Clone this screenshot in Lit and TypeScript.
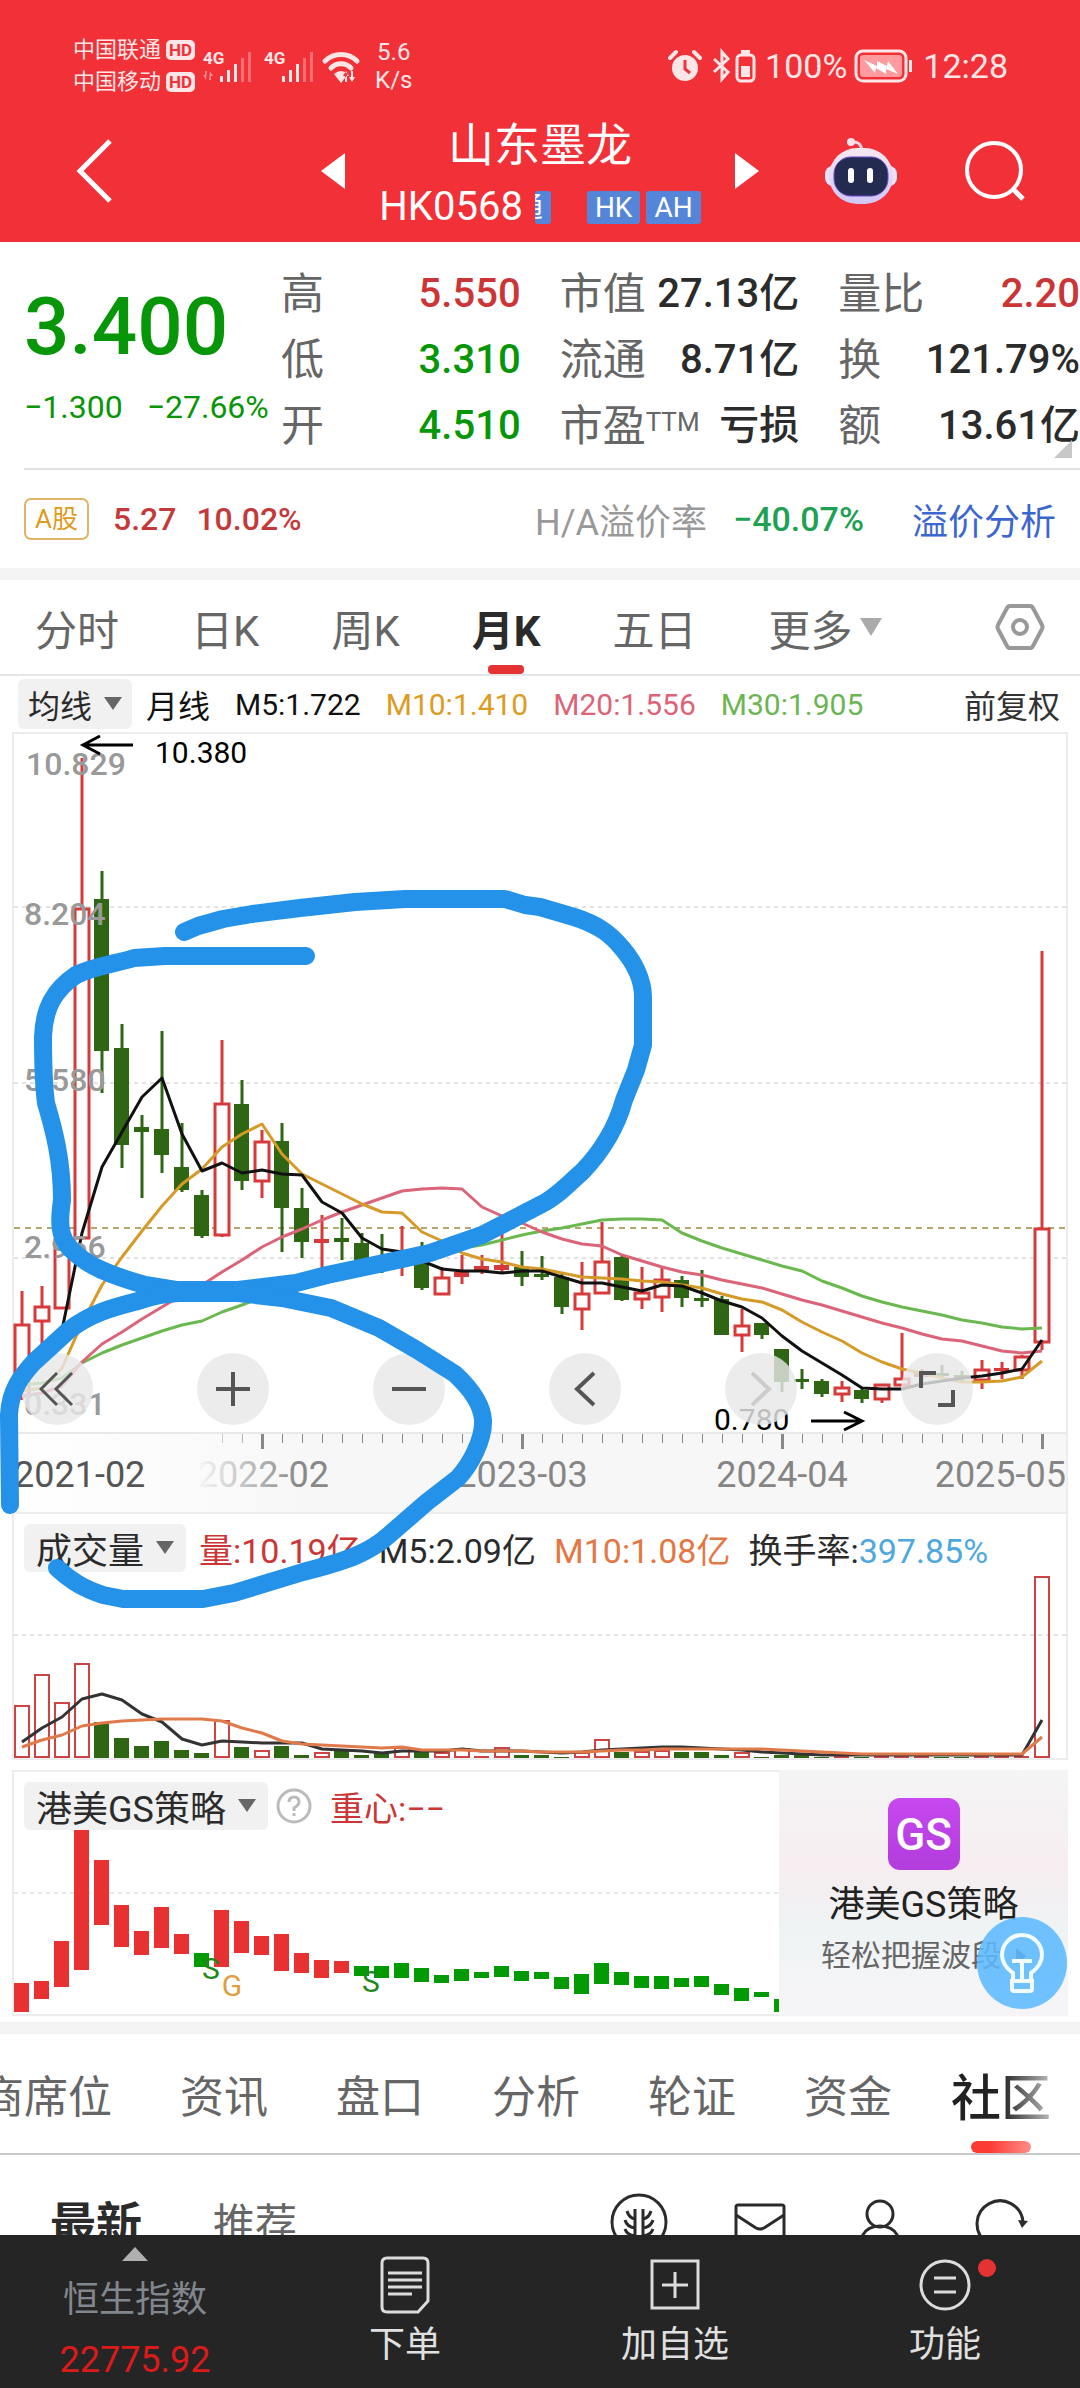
import { LitElement, html, svg, css } from "lit";
import { customElement } from "lit/decorators.js";
import { classMap } from "lit/directives/class-map.js";

type Tone = "up" | "down" | "flat";

// Monthly bars, in plot units: [rising, high, body top, body bottom, low]
const CANDLES: [number, number, number, number, number][] = [
  [1, 1291, 1325, 1396, 1400], [1, 1286, 1307, 1321, 1352], [1, 1240, 1240, 1308, 1308],
  [1, 758, 909, 1238, 1238], [0, 871, 899, 1051, 1093], [0, 1024, 1048, 1145, 1168],
  [0, 1115, 1127, 1132, 1198], [0, 1031, 1129, 1155, 1173], [0, 1123, 1167, 1190, 1192],
  [0, 1190, 1195, 1236, 1238], [1, 1040, 1104, 1235, 1237], [0, 1080, 1104, 1181, 1190],
  [1, 1130, 1142, 1181, 1198], [0, 1123, 1141, 1208, 1252], [0, 1188, 1208, 1242, 1258],
  [1, 1215, 1239, 1243, 1274], [0, 1218, 1238, 1242, 1260], [0, 1233, 1243, 1260, 1262],
  [0, 1234, 1257, 1263, 1273], [1, 1226, 1253, 1257, 1276], [0, 1242, 1260, 1288, 1290],
  [1, 1267, 1278, 1294, 1294], [1, 1255, 1272, 1277, 1284], [1, 1255, 1266, 1270, 1274],
  [1, 1234, 1265, 1270, 1272], [0, 1251, 1267, 1277, 1286], [0, 1256, 1274, 1277, 1280],
  [0, 1272, 1277, 1307, 1314], [1, 1262, 1294, 1309, 1330], [1, 1222, 1262, 1293, 1294],
  [0, 1256, 1257, 1300, 1301], [1, 1267, 1293, 1299, 1309], [1, 1267, 1280, 1297, 1312],
  [0, 1276, 1280, 1298, 1307], [0, 1270, 1298, 1300, 1307], [0, 1296, 1299, 1335, 1335],
  [1, 1309, 1326, 1335, 1352], [0, 1323, 1323, 1335, 1339], [0, 1349, 1349, 1382, 1392],
  [0, 1369, 1379, 1381, 1389], [0, 1379, 1381, 1394, 1397], [1, 1381, 1388, 1394, 1402],
  [0, 1389, 1390, 1399, 1403], [1, 1384, 1385, 1399, 1403], [1, 1333, 1379, 1385, 1386],
  [1, 1369, 1373, 1377, 1385], [0, 1365, 1373, 1375, 1378], [0, 1371, 1375, 1379, 1381],
  [1, 1360, 1370, 1380, 1389], [1, 1362, 1368, 1371, 1379], [1, 1355, 1357, 1370, 1379],
  [1, 951, 1229, 1342, 1350],
];

const MA5 = [1384, 1364, 1330, 1233, 1167, 1132, 1097, 1078, 1134, 1171, 1163, 1173, 1170, 1174, 1175, 1202, 1213, 1238, 1249, 1252, 1261, 1269, 1271, 1271, 1273, 1271, 1271, 1277, 1283, 1283, 1287, 1291, 1285, 1286, 1293, 1301, 1307, 1318, 1336, 1351, 1363, 1375, 1388, 1389, 1389, 1384, 1381, 1378, 1376, 1373, 1369, 1340];
const MA10 = [1391, 1388, 1368, 1323, 1285, 1257, 1231, 1206, 1184, 1169, 1147, 1134, 1124, 1154, 1174, 1184, 1194, 1204, 1212, 1213, 1232, 1241, 1253, 1259, 1262, 1267, 1269, 1273, 1277, 1278, 1279, 1281, 1282, 1285, 1288, 1294, 1299, 1302, 1310, 1322, 1332, 1341, 1353, 1362, 1369, 1373, 1378, 1382, 1382, 1381, 1377, 1361];
const MA20 = [1396, 1393, 1386, 1362, 1344, 1332, 1319, 1307, 1295, 1285, 1272, 1260, 1247, 1237, 1229, 1220, 1212, 1205, 1198, 1191, 1189, 1188, 1189, 1207, 1216, 1223, 1232, 1239, 1244, 1246, 1255, 1261, 1267, 1272, 1275, 1280, 1284, 1288, 1294, 1300, 1305, 1311, 1317, 1323, 1328, 1334, 1339, 1341, 1346, 1351, 1353, 1351];
const MA30 = [1385, 1383, 1378, 1363, 1353, 1345, 1338, 1331, 1325, 1321, 1312, 1305, 1297, 1291, 1285, 1280, 1275, 1270, 1265, 1261, 1256, 1252, 1248, 1245, 1240, 1235, 1231, 1228, 1224, 1220, 1219, 1219, 1220, 1233, 1241, 1248, 1254, 1260, 1266, 1271, 1281, 1288, 1296, 1302, 1307, 1311, 1315, 1320, 1323, 1327, 1329, 1328];

const VOLUME_TOPS = [1706, 1675, 1703, 1664, 1722, 1738, 1746, 1741, 1750, 1753, 1721, 1747, 1751, 1746, 1755, 1753, 1751, 1755, 1753, 1748, 1752, 1753, 1749, 1756, 1748, 1755, 1755, 1757, 1753, 1740, 1752, 1752, 1751, 1752, 1752, 1755, 1753, 1757, 1755, 1755, 1757, 1756, 1757, 1756, 1756, 1756, 1757, 1757, 1756, 1756, 1756, 1577];
const VOLUME_MA5 = [1742, 1728, 1717, 1699, 1694, 1700, 1714, 1722, 1739, 1745, 1741, 1742, 1743, 1743, 1743, 1749, 1750, 1751, 1753, 1751, 1751, 1751, 1749, 1751, 1751, 1751, 1752, 1753, 1752, 1750, 1749, 1748, 1747, 1747, 1748, 1749, 1750, 1752, 1753, 1754, 1755, 1755, 1755, 1755, 1755, 1755, 1755, 1755, 1755, 1755, 1755, 1720];
const VOLUME_MA10 = [1747, 1740, 1735, 1726, 1723, 1721, 1720, 1719, 1719, 1719, 1721, 1728, 1733, 1741, 1744, 1745, 1746, 1747, 1748, 1747, 1750, 1750, 1750, 1751, 1751, 1751, 1752, 1752, 1752, 1751, 1750, 1750, 1749, 1749, 1749, 1749, 1749, 1749, 1750, 1751, 1752, 1753, 1754, 1754, 1754, 1754, 1754, 1754, 1754, 1754, 1754, 1737];

// Strategy blocks: [bullish, top, bottom]
const STRATEGY: [number, number, number][] = [
  [1, 1983, 2012], [1, 1981, 1999], [1, 1941, 1987], [1, 1830, 1970], [1, 1860, 1925],
  [1, 1905, 1947], [1, 1931, 1955], [1, 1907, 1948], [1, 1934, 1954], [0, 1953, 1967],
  [1, 1910, 1967], [1, 1921, 1953], [1, 1936, 1955], [1, 1934, 1971], [1, 1953, 1973],
  [1, 1960, 1978], [1, 1961, 1973], [0, 1966, 1976], [0, 1966, 1978], [0, 1963, 1978],
  [0, 1968, 1982], [0, 1975, 1983], [0, 1969, 1981], [0, 1972, 1978], [0, 1966, 1977],
  [0, 1971, 1981], [0, 1972, 1979], [0, 1977, 1989], [0, 1974, 1994], [0, 1963, 1984],
  [0, 1972, 1985], [0, 1976, 1988], [0, 1976, 1989], [0, 1978, 1987], [0, 1976, 1987],
  [0, 1984, 1995], [0, 1988, 2001], [0, 1992, 1997],
];

const xAt = (i: number) => 22 + i * 20;
const points = (ys: number[]) => ys.map((y, i) => `${xAt(i)},${y}`).join(" ");

const QUOTES: { label: string; sup?: string; value: string; tone: Tone }[] = [
  { label: "高", value: "5.550", tone: "up" },
  { label: "市值", value: "27.13亿", tone: "flat" },
  { label: "量比", value: "2.20", tone: "up" },
  { label: "低", value: "3.310", tone: "down" },
  { label: "流通", value: "8.71亿", tone: "flat" },
  { label: "换", value: "121.79%", tone: "flat" },
  { label: "开", value: "4.510", tone: "down" },
  { label: "市盈", sup: "TTM", value: "亏损", tone: "flat" },
  { label: "额", value: "13.61亿", tone: "flat" },
];

const base = css`
  :host {
    display: block;
    font-family: Roboto, "Noto Sans CJK SC", sans-serif;
  }
  * {
    box-sizing: border-box;
  }
  button {
    display: flex;
    align-items: center;
    justify-content: center;
    margin: 0;
    padding: 0;
    border: 0;
    background: none;
    color: inherit;
    font: inherit;
    white-space: nowrap;
  }
  a {
    color: inherit;
    text-decoration: none;
  }
  svg {
    display: block;
    flex: none;
  }
`;

@customElement("status-bar")
export class StatusBar extends LitElement {
  static styles = [base, css`
    .bar {
      display: flex;
      justify-content: space-between;
      align-items: center;
      height: 104px;
      padding: 27px 72px 0 73px;
      color: #ffe6e6;
    }
    .side {
      display: flex;
      align-items: center;
    }
    .carriers {
      display: grid;
      margin-right: 8px;
    }
    .carrier {
      display: flex;
      align-items: center;
      gap: 5px;
      font-size: 22px;
      line-height: 32px;
    }
    .hd {
      padding: 0 3px;
      border-radius: 5px;
      background: #ffe6e6;
      color: #f13038;
      font-size: 17px;
      font-weight: 700;
      line-height: 20px;
    }
    .speed {
      margin-left: 14px;
      font-size: 24px;
      line-height: 28px;
      text-align: center;
    }
    .level {
      margin: 0 7px 0 9px;
      font-size: 34px;
    }
    .clock {
      margin-left: 9px;
      font-size: 34px;
    }
  `];

  render() {
    return html`
      <div class="bar">
        <div class="side">
          <div class="carriers">
            <div class="carrier">中国联通<span class="hd">HD</span></div>
            <div class="carrier">中国移动<span class="hd">HD</span></div>
          </div>
          <svg width="158" height="36" viewBox="0 0 158 36" fill="#ffe6e6">
            <g font-size="17" font-weight="700">
              <text x="0" y="16">4G</text>
              <text x="61" y="16">4G</text>
            </g>
            <path d="M3 32l-3-5h2v-4h2zM7 23l3 5h-2v4h-2z" opacity=".5" />
            <path d="M17 28h3v6h-3zM24 22h3v12h-3zM31 16h3v18h-3z" />
            <path d="M38 10h3v24h-3zM45 4h3v30h-3z" opacity=".35" />
            <path d="M79 28h3v6h-3zM86 22h3v12h-3zM93 16h3v18h-3z" />
            <path d="M100 10h3v24h-3zM107 4h3v30h-3z" opacity=".35" />
            <g fill="none" stroke="#ffe6e6" stroke-width="5" stroke-linecap="round">
              <path d="M122 13a23 23 0 0 1 32 0M128 20a14 14 0 0 1 20 0" />
            </g>
            <path d="M131 26q7-6 14 0l-7 9zM146 28l-3-5-3 5h2v6h2v-6zM152 29h-2v-6h-2v6h-2l3 5z" />
          </svg>
          <div class="speed"><div>5.6</div><div>K/s</div></div>
        </div>
        <div class="side">
          <svg width="88" height="36" viewBox="0 0 88 36">
            <circle cx="17" cy="20" r="13" fill="#ffe6e6" />
            <path d="M17 12v9l5 4" fill="none" stroke="#f13038" stroke-width="3" />
            <path d="M2 10l6-6M26 4l6 6" stroke="#ffe6e6" stroke-width="4" stroke-linecap="round" />
            <path d="M46 11l14 13-6 7V4l6 7-14 13" fill="none" stroke="#ffe6e6" stroke-width="3" />
            <rect x="69" y="7" width="17" height="26" rx="4" fill="none" stroke="#ffe6e6" stroke-width="3" />
            <path d="M73 2h9v4h-9zM73 18h9v11h-9z" fill="#ffe6e6" />
          </svg>
          <span class="level">100%</span>
          <svg width="60" height="34" viewBox="0 0 60 34">
            <rect x="2" y="2" width="50" height="30" rx="7" fill="none" stroke="#ffe6e6" stroke-width="3" />
            <rect x="6" y="6" width="42" height="22" rx="3" fill="#ff9a9e" />
            <path d="M10 11l13 6v-5l10 5 1-5 10 13-12-5v5l-10-6-1 5z" fill="#fff" />
            <path d="M55 11h3v12h-3z" fill="#ffe6e6" />
          </svg>
          <span class="clock">12:28</span>
        </div>
      </div>
    `;
  }
}

@customElement("stock-header")
export class StockHeader extends LitElement {
  static styles = [base, css`
    .header {
      padding-bottom: 4px;
      background: #f13038;
      color: #fff;
    }
    .row {
      display: grid;
      grid-template-columns: 1fr auto 1fr;
      align-items: center;
      gap: 34px;
      padding: 0 54px;
    }
    .left,
    .right {
      display: flex;
      align-items: center;
      justify-content: space-between;
    }
    .left {
      padding-left: 22px;
    }
    .names {
      padding-top: 10px;
      text-align: center;
    }
    .name {
      margin: 0;
      font-size: 46px;
      font-weight: 400;
      line-height: 62px;
    }
    .code {
      display: flex;
      align-items: center;
      gap: 6px;
      font-size: 40px;
      line-height: 62px;
    }
    .tag {
      padding: 0 8px;
      border-radius: 3px;
      background: #5585d8;
      font-size: 28px;
      line-height: 33px;
    }
    .clipped {
      display: flex;
      justify-content: flex-end;
      width: 16px;
      margin: 0 30px 0 6px;
      padding: 0 8px 0 0;
      overflow: hidden;
    }
  `];

  render() {
    return html`
      <header class="header">
        <status-bar></status-bar>
        <div class="row">
          <div class="left">
            <button aria-label="返回">
              <svg width="38" height="66" viewBox="0 0 38 66" fill="none" stroke="#fff" stroke-width="5">
                <path d="M34 3L4 33l30 30" />
              </svg>
            </button>
            <button aria-label="上一只">
              <svg width="24" height="38" viewBox="0 0 24 38" fill="#fff"><path d="M24 1v36L0 19z" /></svg>
            </button>
          </div>
          <div class="names">
            <h1 class="name">山东墨龙</h1>
            <div class="code">
              <span>HK0568</span>
              <span class="tag clipped">通</span>
              <span class="tag">HK</span>
              <span class="tag">AH</span>
            </div>
          </div>
          <div class="right">
            <button aria-label="下一只">
              <svg width="24" height="38" viewBox="0 0 24 38" fill="#fff"><path d="M0 1v36l24-18z" /></svg>
            </button>
            <button aria-label="智能助手">
              <svg width="74" height="70" viewBox="0 0 74 70">
                <defs>
                  <linearGradient id="shell" x1="0" y1="0" x2="0" y2="1">
                    <stop offset="0" stop-color="#f8e8f2" />
                    <stop offset="1" stop-color="#cfc6f4" />
                  </linearGradient>
                </defs>
                <path d="M28 6q9-1 10 9" fill="none" stroke="#f7d7e4" stroke-width="3" />
                <circle cx="27" cy="6" r="4" fill="#ffe3ea" />
                <rect x="1" y="30" width="72" height="20" rx="8" fill="#e9e2f8" />
                <rect x="5" y="12" width="64" height="56" rx="28" fill="url(#shell)" />
                <rect x="10" y="21" width="54" height="39" rx="17" fill="#232c50" stroke="#6a48c8" stroke-width="1" />
                <path d="M27 35v9M46 35v9" stroke="#fff" stroke-width="6" stroke-linecap="round" />
              </svg>
            </button>
            <button aria-label="搜索">
              <svg width="62" height="62" viewBox="0 0 62 62" fill="none" stroke="#fff" stroke-width="4">
                <circle cx="30" cy="30" r="27" />
                <path d="M49 49l10 10" stroke-width="5" />
              </svg>
            </button>
          </div>
        </div>
      </header>
    `;
  }
}

@customElement("quote-summary")
export class QuoteSummary extends LitElement {
  static styles = [base, css`
    .top {
      display: grid;
      grid-template-columns: 257px 1fr;
      margin-left: 24px;
      padding: 19px 0 9px;
      border-bottom: 2px solid #e2e2e2;
    }
    .price {
      padding-top: 16px;
      font-size: 80px;
      font-weight: 500;
      line-height: 100px;
    }
    .change {
      display: flex;
      gap: 24px;
      font-size: 32px;
      line-height: 60px;
      white-space: nowrap;
    }
    .stats {
      display: grid;
      grid-template-columns: 240fr 240fr 242fr;
      grid-auto-rows: 66px;
      column-gap: 39px;
      margin: 0;
      font-size: 40px;
      line-height: 66px;
      white-space: nowrap;
    }
    .stat {
      display: flex;
      justify-content: space-between;
    }
    .label {
      color: #666;
      font-size: 43px;
    }
    .sup {
      font-size: 26px;
      line-height: 26px;
      vertical-align: 10px;
    }
    .value {
      margin: 0;
      font-weight: 500;
    }
    .up {
      color: #cc3535;
    }
    .down {
      color: #079607;
    }
    .flat {
      color: #2b2b2b;
    }
    .more {
      position: absolute;
      right: 8px;
      bottom: 12px;
    }
    .summary {
      position: relative;
    }
    .ah {
      display: flex;
      align-items: center;
      height: 98px;
      padding: 0 24px;
      font-size: 32px;
    }
    .badge {
      margin-right: 24px;
      padding: 0 9px;
      border: 2px solid #e0b566;
      border-radius: 7px;
      color: #dd9b20;
      font-size: 26px;
      line-height: 38px;
    }
    .pct {
      margin: 0 auto 0 20px;
    }
    .ratio {
      color: #999;
      font-size: 36px;
    }
    .premium {
      margin: 0 48px 0 26px;
      color: #1ea152;
      font-size: 34px;
      font-weight: 500;
    }
    .red {
      color: #c43a3a;
      font-weight: 500;
    }
    .link {
      color: #3b66d0;
      font-size: 36px;
    }
  `];

  render() {
    return html`
      <section>
        <div class="summary">
          <div class="top">
            <div class="down">
              <div class="price">3.400</div>
              <div class="change"><span>−1.300</span><span>−27.66%</span></div>
            </div>
            <dl class="stats">
              ${QUOTES.map((q) => html`
                <div class="stat">
                  <dt class="label">${q.label}${q.sup ? html`<span class="sup">${q.sup}</span>` : ""}</dt>
                  <dd class="value ${q.tone}">${q.value}</dd>
                </div>`)}
            </dl>
          </div>
          <svg class="more" width="18" height="18" viewBox="0 0 18 18"><path d="M18 0v18H0z" fill="#c8c8c8" /></svg>
        </div>
        <div class="ah">
          <span class="badge">A股</span>
          <span class="red">5.27</span>
          <span class="red pct">10.02%</span>
          <span class="ratio">H/A溢价率</span>
          <span class="premium">−40.07%</span>
          <a class="link" href="#premium">溢价分析</a>
        </div>
      </section>
    `;
  }
}

@customElement("period-tabs")
export class PeriodTabs extends LitElement {
  static styles = [base, css`
    .tabs {
      display: flex;
      align-items: stretch;
      gap: 72px;
      height: 96px;
      padding: 0 35px;
      border-bottom: 2px solid #e6e6e6;
      color: #666;
      font-size: 42px;
    }
    .tab {
      position: relative;
      gap: 8px;
    }
    .active {
      color: #2b2b2b;
      font-weight: 700;
    }
    .active::after {
      content: "";
      position: absolute;
      bottom: 0;
      left: calc(50% - 18px);
      width: 36px;
      height: 9px;
      border-radius: 4px;
      background: #e53232;
    }
    .settings {
      margin-left: auto;
    }
  `];

  render() {
    return html`
      <nav class="tabs">
        ${["分时", "日K", "周K", "月K", "五日"].map((t) => html`
          <button class=${classMap({ tab: true, active: t === "月K" })}>${t}</button>`)}
        <button class="tab" aria-haspopup="menu">更多
          <svg width="22" height="20" viewBox="0 0 22 20" fill="#aaa"><path d="M0 1h22L11 19z" /></svg>
        </button>
        <button class="settings" aria-label="图表设置">
          <svg width="50" height="48" viewBox="0 0 50 48" fill="none" stroke="#999" stroke-width="4">
            <path d="M15 3h20q2 0 3 2l9 17q1 2 0 4l-9 17q-1 2-3 2H15q-2 0-3-2L3 26q-1-2 0-4l9-17q1-2 3-2z" />
            <circle cx="25" cy="24" r="7" />
          </svg>
        </button>
      </nav>
    `;
  }
}

@customElement("chart-board")
export class ChartBoard extends LitElement {
  static styles = [base, css`
    .board {
      position: relative;
    }
    .legend {
      display: flex;
      align-items: center;
      gap: 25px;
      height: 56px;
      padding: 0 20px 0 18px;
      font-size: 30px;
      white-space: nowrap;
    }
    .chip {
      gap: 12px;
      height: 48px;
      padding: 0 12px;
      border-radius: 6px;
      background: #f1f1f1;
      color: #2b2b2b;
      font-size: 36px;
    }
    .small {
      height: 50px;
      margin-right: -11px;
      padding: 0 10px;
      font-size: 32px;
    }
    .adjust {
      margin-left: auto;
      color: #333;
      font-size: 32px;
    }
    .cjk {
      font-size: 32px;
    }
    .black {
      color: #111;
    }
    .dark {
      color: #2b2b2b;
    }
    .gold {
      color: #dd9b20;
    }
    .pink {
      color: #dc6478;
    }
    .green {
      color: #6bb552;
    }
    .red {
      color: #cc3535;
    }
    .orange {
      color: #e47845;
    }
    .blue {
      color: #4ea8de;
    }
    .panel {
      margin: 0 12px;
      border: 2px solid #ececec;
      border-bottom: 0;
    }
    .plot,
    .ink {
      width: 100%;
      height: auto;
    }
    .plot {
      overflow: visible;
    }
    .price {
      position: relative;
    }
    .controls {
      position: absolute;
      right: 41px;
      bottom: 7px;
      left: -45px;
      display: grid;
      grid-template-columns: repeat(6, 1fr);
    }
    .round {
      width: 72px;
      height: 72px;
      justify-self: center;
      border-radius: 50%;
      background: rgba(232, 232, 232, 0.82);
    }
    .ticks {
      background: linear-gradient(90deg, #fff, #f7f7f7 30%);
      border-top: 2px solid #e9e9e9;
    }
    .readout {
      display: flex;
      align-items: center;
      gap: 18px;
      height: 58px;
      padding: 10px 10px 0;
      font-size: 34px;
      white-space: nowrap;
    }
    .first {
      margin-left: -5px;
    }
    .volume {
      border-bottom: 2px solid #ececec;
    }
    .strategy {
      display: grid;
      grid-template-columns: 767fr 289fr;
      margin: 10px 12px 6px;
    }
    .main {
      border: 2px solid #ececec;
      border-right: 0;
    }
    .help {
      margin-left: -10px;
    }
    .promo {
      display: flex;
      flex-direction: column;
      align-items: center;
      padding-top: 28px;
      background: linear-gradient(180deg, #f5f5f6, #f6edf0 40%, #eef3f4 66%, #f5f5f8 88%);
      color: #222;
      font-size: 36px;
      line-height: 70px;
      white-space: nowrap;
    }
    .logo {
      width: 72px;
      height: 72px;
      border-radius: 12px;
      background: linear-gradient(#c748f0, #b23cdc);
      color: #fff;
      font-size: 44px;
      font-weight: 500;
      line-height: 74px;
      text-align: center;
    }
    .slogan {
      display: flex;
      align-items: center;
      gap: 15px;
      color: #666;
      font-size: 30px;
      line-height: 32px;
    }
    .ink {
      position: absolute;
      top: 56px;
      left: 0;
      pointer-events: none;
    }
    .bulb {
      position: absolute;
      right: 13px;
      bottom: 7px;
      width: 90px;
      height: 92px;
      border-radius: 50%;
      background: rgba(92, 185, 255, 0.88);
    }
  `];

  private caret() {
    return html`<svg width="18" height="14" viewBox="0 0 18 14" fill="#666"><path d="M0 0h18L9 13z" /></svg>`;
  }

  private candle(i: number) {
    const [rising, high, top, bottom, low] = CANDLES[i];
    const x = xAt(i);
    const color = rising ? "#d63a3a" : "#2f6613";
    const hollow = rising && bottom - top > 5;
    return svg`
      <path d="M${x} ${high}V${top}M${x} ${bottom}V${low}" stroke=${color} stroke-width="3" />
      ${hollow
        ? svg`<rect x=${x - 7} y=${top} width="14" height=${bottom - top} fill="#fff" stroke=${color} stroke-width="3" />`
        : svg`<rect x=${x - 8} y=${top} width="15" height=${Math.max(bottom - top, 3)} fill=${color} />`}
    `;
  }

  private volumeBar(i: number) {
    const rising = CANDLES[i][0];
    const x = xAt(i);
    const top = VOLUME_TOPS[i];
    return rising && top < 1754
      ? svg`<rect x=${x - 7} y=${top} width="14" height=${1757 - top} fill="none" stroke="#cc4444" stroke-width="2" />`
      : svg`<rect x=${x - 8} y=${top} width="15" height=${1758 - top} fill=${rising ? "#cc4444" : "#2f6613"} />`;
  }

  render() {
    const grid = (y: number) => svg`<path d="M14 ${y}H1066" stroke="#e2e2e2" stroke-width="2" stroke-dasharray="4 4" />`;
    const line = (ys: number[], color: string) =>
      svg`<polyline points=${points(ys)} fill="none" stroke=${color} stroke-width="3" stroke-linejoin="round" />`;
    return html`
      <section class="board">
        <div class="legend">
          <button class="chip small" aria-haspopup="menu">均线${this.caret()}</button>
          <span class="cjk black">月线</span>
          <span class="black">M5:1.722</span>
          <span class="gold">M10:1.410</span>
          <span class="pink">M20:1.556</span>
          <span class="green">M30:1.905</span>
          <span class="adjust">前复权</span>
        </div>

        <div class="panel">
          <div class="price">
            <svg class="plot" viewBox="14 734 1052 698" role="img" aria-label="月K线">
              ${[907, 1083, 1258].map(grid)}
              <path d="M14 1228H1066" stroke="#b5a56e" stroke-width="2" stroke-dasharray="6 5" />
              ${CANDLES.map((_, i) => this.candle(i))}
              ${line(MA30, "#6cb850")}
              ${line(MA20, "#dc6478")}
              ${line(MA10, "#d69a28")}
              ${line(MA5, "#111")}
              <g fill="#999" font-size="32" font-weight="500">
                <text x="26" y="775">10.829</text>
                <text x="24" y="925">8.204</text>
                <text x="24" y="1091">5.580</text>
                <text x="24" y="1258">2.956</text>
                <text x="24" y="1415">0.331</text>
              </g>
              <g fill="#000" font-size="30">
                <text x="155" y="763">10.380</text>
                <text x="714" y="1430">0.780</text>
              </g>
              <path d="M133 745H83M100 736L83 745l17 9M811 1421h50M844 1412l18 9-18 9" fill="none" stroke="#000" stroke-width="3" />
            </svg>
            <div class="controls">
              <button class="round" aria-label="最早">
                <svg width="36" height="36" viewBox="0 0 36 36" fill="none" stroke="#555" stroke-width="3"><path d="M18 2L2 18l16 16M33 2L17 18l16 16" /></svg>
              </button>
              <button class="round" aria-label="放大">
                <svg width="34" height="34" viewBox="0 0 34 34" stroke="#555" stroke-width="4"><path d="M17 0v34M0 17h34" /></svg>
              </button>
              <button class="round" aria-label="缩小">
                <svg width="34" height="34" viewBox="0 0 34 34" stroke="#555" stroke-width="4"><path d="M0 17h34" /></svg>
              </button>
              <button class="round" aria-label="左移">
                <svg width="24" height="36" viewBox="0 0 24 36" fill="none" stroke="#555" stroke-width="4"><path d="M21 2L4 18l17 16" /></svg>
              </button>
              <button class="round" aria-label="右移" disabled>
                <svg width="24" height="36" viewBox="0 0 24 36" fill="none" stroke="#ccc" stroke-width="4"><path d="M3 2l17 16L3 34" /></svg>
              </button>
              <button class="round" aria-label="全屏">
                <svg width="36" height="36" viewBox="0 0 36 36" fill="none" stroke="#555" stroke-width="4"><path d="M2 17V2h15M34 19v15H19" /></svg>
              </button>
            </div>
          </div>
          <div class="ticks">
            <svg class="plot" viewBox="14 1434 1052 78" role="img" aria-label="时间轴">
              <defs>
                <linearGradient id="fade" gradientUnits="userSpaceOnUse" x1="200" x2="300" y1="0" y2="0">
                  <stop offset="0" stop-color="#888" stop-opacity="0.05" />
                  <stop offset="1" stop-color="#888" />
                </linearGradient>
              </defs>
              ${CANDLES.map((_, i) => {
                if (i < 10) return "";
                const major = i % 13 === 12;
                return svg`<rect x=${xAt(i) - (major ? 1 : 0)} y="1434" width=${major ? 3 : 1} height=${major ? 15 : 9}
                  fill="#888" opacity=${i === 10 ? 0.4 : i === 11 ? 0.6 : 1} />`;
              })}
              <g font-size="36" fill="#858585">
                <text x="14" y="1487" fill="#555">2021-02</text>
                <text x="329" y="1487" text-anchor="end" fill="url(#fade)">2022-02</text>
                <text x="522" y="1487" text-anchor="middle">2023-03</text>
                <text x="782" y="1487" text-anchor="middle">2024-04</text>
                <text x="1066" y="1487" text-anchor="end">2025-05</text>
              </g>
            </svg>
          </div>
        </div>

        <div class="panel volume">
          <div class="readout">
            <button class="chip" aria-haspopup="menu">成交量${this.caret()}</button>
            <span class="red first">量:10.19亿</span>
            <span class="dark">M5:2.09亿</span>
            <span class="orange">M10:1.08亿</span>
            <span class="dark">换手率:<span class="blue">397.85%</span></span>
          </div>
          <svg class="plot" viewBox="14 1572 1052 186" role="img" aria-label="成交量">
            ${grid(1635)}
            ${CANDLES.map((_, i) => this.volumeBar(i))}
            ${line(VOLUME_MA5, "#333")}
            ${line(VOLUME_MA10, "#e07a4a")}
          </svg>
        </div>

        <div class="strategy">
          <div class="main">
            <div class="readout">
              <button class="chip" aria-haspopup="menu">港美GS策略${this.caret()}</button>
              <button class="help" aria-label="说明">
                <svg width="36" height="36" viewBox="0 0 36 36" fill="none" stroke="#bbb" stroke-width="3">
                  <circle cx="18" cy="18" r="16" />
                  <path d="M13 14q0-5 5-5t5 5q0 3-5 6v3" />
                  <path d="M18 25v3" />
                </svg>
              </button>
              <span class="red">重心:−−</span>
            </div>
            <svg class="plot" viewBox="14 1830 765 184" role="img" aria-label="港美GS策略">
              <path d="M14 1893H779" stroke="#e6e6e6" stroke-width="2" stroke-dasharray="4 4" />
              ${STRATEGY.map(([bullish, top, bottom], i) => svg`
                <rect x=${xAt(i) - 8} y=${top} width="15" height=${bottom - top} fill=${bullish ? "#e83232" : "#049a04"} />`)}
              <rect x="774" y="1999" width="5" height="13" fill="#049a04" />
              <g font-size="30" text-anchor="middle">
                <text x="211" y="1979" fill="#1a8a1a">S</text>
                <text x="232" y="1996" fill="#e0a040">G</text>
                <text x="371" y="1992" fill="#1a8a1a">S</text>
              </g>
            </svg>
          </div>
          <div class="promo">
            <div class="logo">GS</div>
            <div>港美GS策略</div>
            <div class="slogan">轻松把握波段
              <svg width="10" height="16" viewBox="0 0 10 16" fill="#666"><path d="M0 0l10 8-10 8z" /></svg>
            </div>
          </div>
        </div>

        <svg class="ink" viewBox="0 732 1080 1040" fill="none" stroke="#2392e8" stroke-width="18" stroke-linecap="round" stroke-linejoin="round">
          <path d="M184 932L198 926L223 919L252 914L300 908L355 902L405 899L505 899L525 905L540 907L574 917C600 925 612 936 622 948C634 962 643 980 643 997V1045L636 1070L624 1100C618 1122 605 1148 582 1172C570 1182 556 1198 540 1205L482 1235L430 1253L379 1264L327 1275L296 1283L238 1290H176L145 1285C110 1275 88 1266 74 1252C56 1238 60 1215 62 1200C62 1160 54 1130 46 1103C43 1080 43 1060 43 1037C44 1008 54 990 76 975C95 966 115 964 134 958L165 956H306" />
          <path d="M10 1505L9 1415C10 1390 22 1375 34 1362L69 1330C90 1314 110 1308 138 1301C155 1295 165 1294 178 1293H238L282 1298L331 1308L379 1328L417 1350L455 1374C470 1388 482 1405 483 1420C484 1440 470 1465 458 1478L427 1502L389 1535C370 1552 350 1560 303 1572L234 1593L203 1599H123L103 1595C85 1589 72 1582 57 1568" />
        </svg>

        <button class="bulb" aria-label="提示">
          <svg width="44" height="60" viewBox="0 0 44 60" fill="none" stroke="#f2fbff" stroke-width="4">
            <path d="M13 48V40C6 35 2 29 2 22a20 20 0 0 1 40 0c0 7-4 13-11 18v8zM12 48h20v8q0 2-2 2H14q-2 0-2-2zM12 28h20M22 28v19" />
          </svg>
        </button>
      </section>
    `;
  }
}

@customElement("community-section")
export class CommunitySection extends LitElement {
  static styles = [base, css`
    .tabs {
      display: flex;
      justify-content: flex-end;
      gap: 68px;
      height: 121px;
      padding-right: 29px;
      overflow: hidden;
      border-bottom: 2px solid #c8c8c8;
      color: #666;
      font-size: 44px;
    }
    .tab {
      flex: none;
    }
    .active {
      position: relative;
      margin-left: -9px;
      color: #2b2b2b;
      font-size: 50px;
      font-weight: 500;
    }
    .label {
      background: linear-gradient(90deg, #222 50%, #bbb);
      background-clip: text;
      -webkit-background-clip: text;
      color: transparent;
    }
    .active::after {
      content: "";
      position: absolute;
      bottom: 0;
      left: calc(50% - 30px);
      width: 60px;
      height: 12px;
      border-radius: 6px;
      background: linear-gradient(90deg, #fb3b34 30%, #ff8d88);
    }
    .row {
      display: flex;
      align-items: center;
      gap: 71px;
      height: 130px;
      padding: 0 52px 0 50px;
      color: #666;
      font-size: 42px;
    }
    .current {
      color: #2b2b2b;
      font-size: 46px;
      font-weight: 700;
    }
    .icons {
      display: flex;
      gap: 66px;
      margin-left: auto;
    }
  `];

  render() {
    return html`
      <section>
        <nav class="tabs">
          ${["商席位", "资讯", "盘口", "分析", "轮证", "资金"].map((t) => html`<button class="tab">${t}</button>`)}
          <button class="tab active"><span class="label">社区</span></button>
        </nav>
        <div class="row">
          <button class="current">最新</button>
          <button>推荐</button>
          <div class="icons">
            <button aria-label="话题">
              <svg width="58" height="58" viewBox="0 0 58 58" fill="none" stroke="#2b2b2b" stroke-width="3">
                <circle cx="29" cy="31" r="27" />
                <path d="M25 48V18M33 48V18M25 28q-6-1-8-8M33 28q6-1 8-8M25 37q-8-1-10-8M33 37q8-1 10-8M25 45q-8-1-10-7M33 45q8-1 10-7" />
              </svg>
            </button>
            <button aria-label="消息">
              <svg width="52" height="50" viewBox="0 0 52 50" fill="none" stroke="#2b2b2b" stroke-width="3">
                <rect x="2" y="10" width="48" height="38" rx="2" />
                <path d="M2 20l20 13q4 2 8 0l20-13" />
              </svg>
            </button>
            <button aria-label="我的">
              <svg width="56" height="50" viewBox="0 0 56 50" fill="none" stroke="#2b2b2b" stroke-width="3">
                <circle cx="28" cy="19" r="13" />
                <path d="M8 50q2-19 20-19t20 19" />
              </svg>
            </button>
            <button aria-label="刷新">
              <svg width="54" height="50" viewBox="0 0 54 50" fill="none" stroke="#2b2b2b" stroke-width="3">
                <path d="M12 47A23 23 0 1 1 49 27" />
                <path d="M44 25l10 1-6 7z" fill="#2b2b2b" stroke="none" />
              </svg>
            </button>
          </div>
        </div>
      </section>
    `;
  }
}

@customElement("action-bar")
export class ActionBar extends LitElement {
  static styles = [base, css`
    .bar {
      display: grid;
      grid-template-columns: repeat(4, 1fr);
      height: 153px;
      background: #252525;
      color: #e0e0e0;
      font-size: 36px;
    }
    .item {
      flex-direction: column;
      justify-content: flex-start;
      gap: 5px;
      padding-top: 21px;
      line-height: 52px;
    }
    .index {
      gap: 0;
      padding-top: 12px;
      color: #81878c;
      line-height: 60px;
    }
    .arrow {
      margin-bottom: 9px;
    }
    .points {
      color: #dc1a1a;
    }
  `];

  render() {
    return html`
      <nav class="bar">
        <button class="item index">
          <svg class="arrow" width="26" height="14" viewBox="0 0 26 14" fill="#b0b0b0"><path d="M13 0l13 14H0z" /></svg>
          <span>恒生指数</span>
          <span class="points">22775.92</span>
        </button>
        <button class="item">
          <svg width="50" height="58" viewBox="0 0 50 58" fill="none" stroke="#dcdcdc" stroke-width="3">
            <path d="M7 2h36q5 0 5 5v38l-10 11H7q-5 0-5-5V7q0-5 5-5z" />
            <path d="M8 17h34M8 24h34M8 31h34M8 38h24" />
          </svg>
          <span>下单</span>
        </button>
        <button class="item">
          <svg width="50" height="58" viewBox="0 0 50 58" fill="none" stroke="#dcdcdc" stroke-width="3">
            <rect x="2" y="5" width="46" height="47" />
            <path d="M25 16v26M12 29h26" />
          </svg>
          <span>加自选</span>
        </button>
        <button class="item">
          <svg width="104" height="58" viewBox="0 0 104 58" fill="none" stroke="#dcdcdc" stroke-width="3">
            <circle cx="52" cy="29" r="24" />
            <path d="M41 22h22M41 36h22" />
            <circle cx="94" cy="12" r="9" fill="#e53232" stroke="none" />
          </svg>
          <span>功能</span>
        </button>
      </nav>
    `;
  }
}

@customElement("app-root")
export class AppRoot extends LitElement {
  static styles = [base, css`
    .app {
      display: flex;
      flex-direction: column;
      height: 100vh;
      background: #fff;
    }
    .content {
      flex: 1;
      min-height: 0;
      overflow: hidden auto;
      scrollbar-width: none;
    }
    .band {
      height: 12px;
      background: #f4f4f4;
    }
  `];

  render() {
    return html`
      <div class="app">
        <stock-header></stock-header>
        <main class="content">
          <quote-summary></quote-summary>
          <div class="band"></div>
          <period-tabs></period-tabs>
          <chart-board></chart-board>
          <div class="band"></div>
          <community-section></community-section>
        </main>
        <action-bar></action-bar>
      </div>
    `;
  }
}
